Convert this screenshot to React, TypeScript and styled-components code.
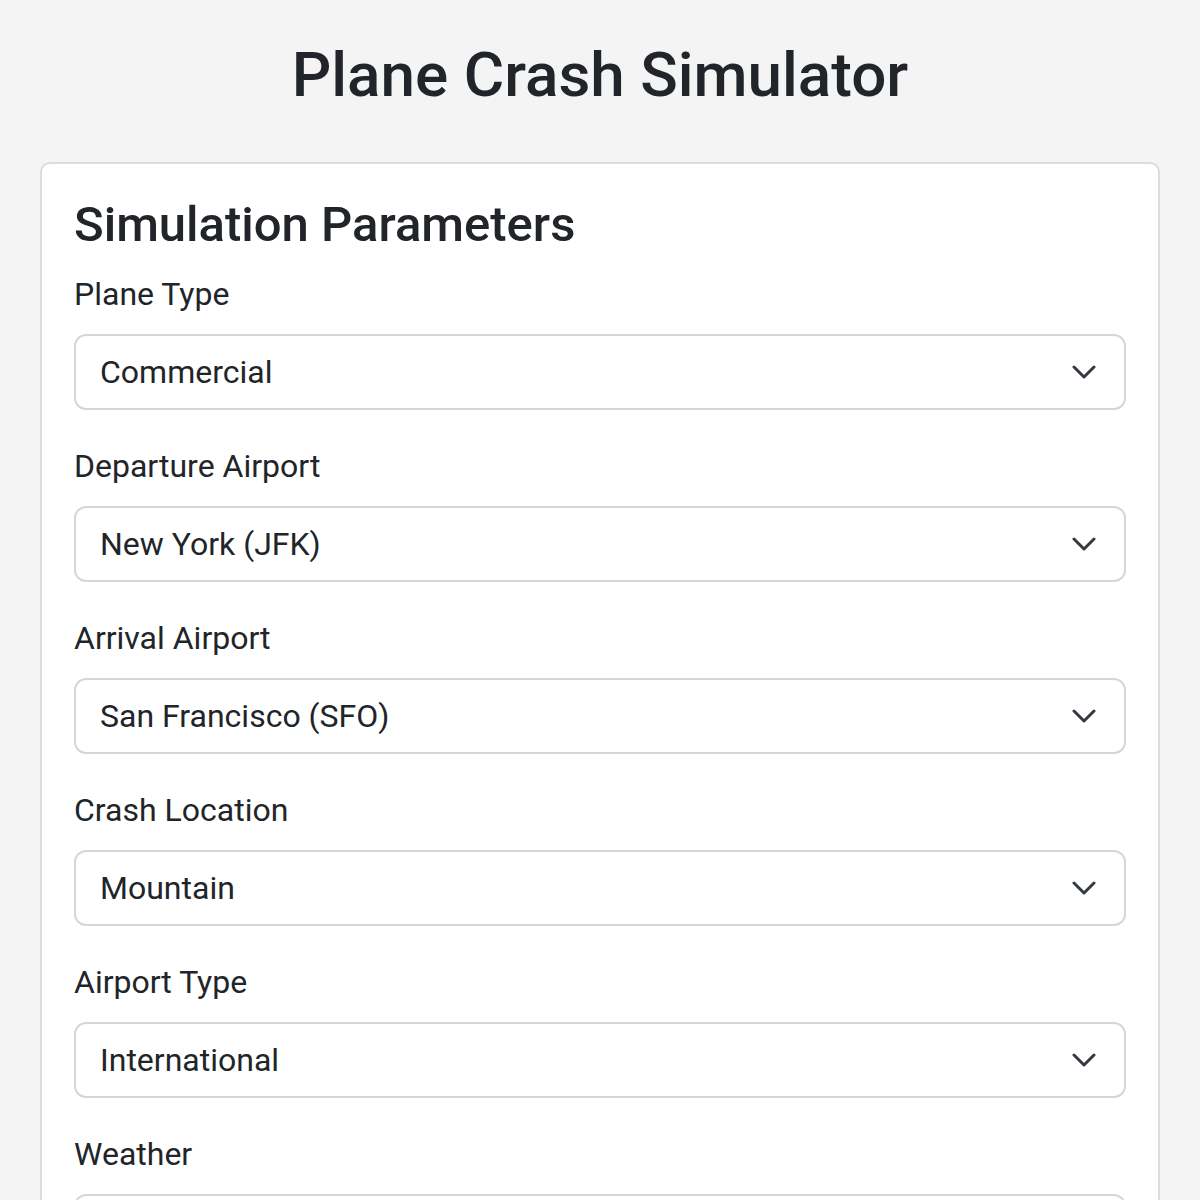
import React from 'react'
import styled, { createGlobalStyle } from 'styled-components'

const GlobalStyle = createGlobalStyle`
  * {
    box-sizing: border-box;
  }

  body {
    margin: 0;
    background: #f4f4f4;
    color: #212529;
    font-family: Roboto, "Noto Sans", "Liberation Sans", sans-serif;
  }
`

type Field = {
  id: string
  label: string
  options: string[]
}

const FIELDS: Field[] = [
  { id: 'planeType', label: 'Plane Type', options: ['Commercial', 'Private Jet', 'Cargo', 'Military'] },
  {
    id: 'departure',
    label: 'Departure Airport',
    options: ['New York (JFK)', 'Los Angeles (LAX)', 'Chicago (ORD)', 'London (LHR)'],
  },
  {
    id: 'arrival',
    label: 'Arrival Airport',
    options: ['San Francisco (SFO)', 'Miami (MIA)', 'Tokyo (HND)', 'Paris (CDG)'],
  },
  { id: 'location', label: 'Crash Location', options: ['Mountain', 'Ocean', 'Desert', 'Forest', 'Urban Area'] },
  { id: 'airportType', label: 'Airport Type', options: ['International', 'Regional', 'Military', 'Private'] },
  { id: 'weather', label: 'Weather', options: ['Clear', 'Rain', 'Snow', 'Storm', 'Fog'] },
]

const Chevron = () => (
  <svg width="24" height="14" viewBox="0 0 24 14" fill="none" aria-hidden="true">
    <path d="M2 2l10 10L22 2" stroke="#343a40" strokeWidth="3" strokeLinecap="round" strokeLinejoin="round" />
  </svg>
)

const App = (): React.ReactElement => {
  return (
    <>
      <GlobalStyle />
      <Page>
        <PageTitle>Plane Crash Simulator</PageTitle>
        <Card>
          <CardTitle>Simulation Parameters</CardTitle>
          {FIELDS.map((field) => (
            <FormGroup key={field.id}>
              <Label htmlFor={field.id}>{field.label}</Label>
              <SelectWrap>
                <Select id={field.id} defaultValue={field.options[0]}>
                  {field.options.map((opt) => (
                    <option key={opt}>{opt}</option>
                  ))}
                </Select>
                <ArrowIcon>
                  <Chevron />
                </ArrowIcon>
              </SelectWrap>
            </FormGroup>
          ))}
          <RunButton type="button">Run Simulation</RunButton>
        </Card>
      </Page>
    </>
  )
}

export default App

const Page = styled.div`
  padding: 38px 40px 40px;
`

const PageTitle = styled.h1`
  margin: 0 0 50px;
  text-align: center;
  font-size: 62px;
  line-height: 1.2;
  font-weight: 500;
  color: #212529;
`

const Card = styled.div`
  background: #fff;
  border: 2px solid #dcdcdc;
  border-radius: 10px;
  padding: 32px;
`

const CardTitle = styled.h2`
  margin: 0 0 15px;
  font-size: 49px;
  line-height: 1.2;
  font-weight: 500;
`

const FormGroup = styled.div`
  display: flex;
  flex-direction: column;
  gap: 16px;
  margin-bottom: 32px;
`

const Label = styled.label`
  font-size: 32px;
  line-height: 48px;
  font-weight: 400;
`

const SelectWrap = styled.div`
  position: relative;
`

const Select = styled.select`
  appearance: none;
  -webkit-appearance: none;
  display: block;
  width: 100%;
  height: 76px;
  padding: 12px 80px 12px 24px;
  font-family: inherit;
  font-size: 32px;
  line-height: 48px;
  color: #212529;
  background: #fff;
  border: 2px solid #d4d6d9;
  border-radius: 12px;
  outline: none;
`

const ArrowIcon = styled.span`
  position: absolute;
  right: 30px;
  top: 50%;
  transform: translateY(-50%);
  display: flex;
  pointer-events: none;
`

const RunButton = styled.button`
  width: 100%;
  padding: 16px 24px;
  font-family: inherit;
  font-size: 32px;
  color: #fff;
  background: #dc3545;
  border: none;
  border-radius: 12px;
`
